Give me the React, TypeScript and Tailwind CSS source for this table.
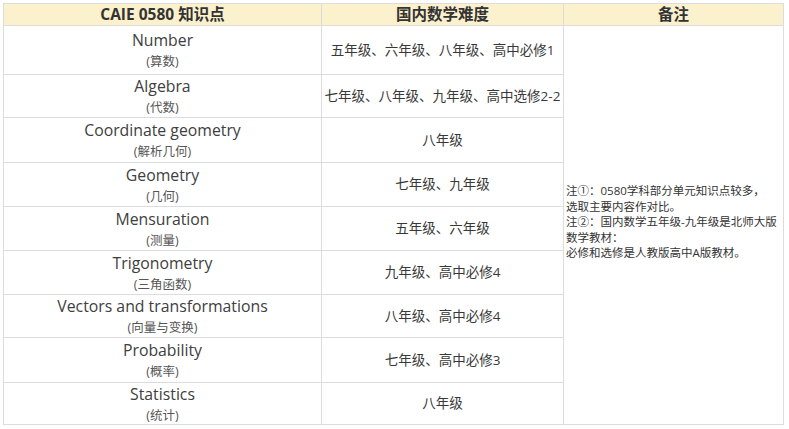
import React from 'react';

/* CAIE 0580 syllabus vs. domestic grade levels — comparison table */

const rows = [
  { en: 'Number', zh: '(算数)', level: '五年级、六年级、八年级、高中必修1', h: 'h-[48px]' },
  { en: 'Algebra', zh: '(代数)', level: '七年级、八年级、九年级、高中选修2-2', h: 'h-[42px]' },
  { en: 'Coordinate geometry', zh: '(解析几何)', level: '八年级', h: 'h-[44px]' },
  { en: 'Geometry', zh: '(几何)', level: '七年级、九年级', h: 'h-[43px]' },
  { en: 'Mensuration', zh: '(测量)', level: '五年级、六年级', h: 'h-[43px]' },
  { en: 'Trigonometry', zh: '(三角函数)', level: '九年级、高中必修4', h: 'h-[43px]' },
  { en: 'Vectors and transformations', zh: '(向量与变换)', level: '八年级、高中必修4', h: 'h-[42px]' },
  { en: 'Probability', zh: '(概率)', level: '七年级、高中必修3', h: 'h-[44px]' },
  { en: 'Statistics', zh: '(统计)', level: '八年级', h: 'h-[41px]' },
];

const font = "font-['Open_Sans','Noto_Sans_CJK_SC',sans-serif]";

export default function App() {
  return (
    <div className={`w-[789px] h-[429px] bg-white pt-[3px] pl-[3px] ${font}`}>
      <div className="flex w-fit flex-col gap-px bg-[#dcdcdc] p-px">
        {/* header */}
        <div className="flex h-[21px] gap-px text-[15.5px] font-bold text-[#333] leading-[21px]">
          <div className="w-[317px] bg-[#fcf1cd] text-center">CAIE 0580 知识点</div>
          <div className="w-[241px] bg-[#fcf1cd] text-center">国内数学难度</div>
          <div className="w-[219px] bg-[#fcf1cd] text-center">备注</div>
        </div>

        <div className="flex gap-px">
          <div className="flex flex-col gap-px">
            {rows.map((r) => (
              <div key={r.en} className={`flex gap-px ${r.h}`}>
                <div className="flex w-[317px] flex-col items-center justify-center bg-white">
                  <div className="text-[15.8px] leading-[20px] text-[#404040]">{r.en}</div>
                  <div className="mt-[4px] text-[12.5px] leading-[16px] text-[#555]">{r.zh}</div>
                </div>
                <div className="flex w-[241px] items-center justify-center bg-white text-[13.5px] text-[#383838]">
                  {r.level}
                </div>
              </div>
            ))}
          </div>

          <div className="flex w-[219px] flex-col justify-center bg-white pb-[6px] pl-[2px] text-[11.5px] leading-[15.5px] text-[#333]">
            <p>注①：0580学科部分单元知识点较多，</p>
            <p>选取主要内容作对比。</p>
            <p>注②：国内数学五年级-九年级是北师大版</p>
            <p>数学教材：</p>
            <p>必修和选修是人教版高中A版教材。</p>
          </div>
        </div>
      </div>
    </div>
  );
}
